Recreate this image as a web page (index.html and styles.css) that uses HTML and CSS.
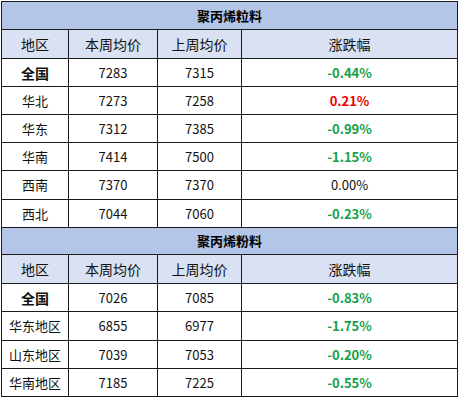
FILE: index.html
```html
<!DOCTYPE html>
<html lang="zh">
<head>
<meta charset="utf-8">
<link rel="stylesheet" href="styles.css">
</head>
<body>
<table class="price-table">
  <colgroup>
    <col class="c1"><col class="c2"><col class="c3"><col class="c4">
  </colgroup>
  <tbody>
    <tr class="r28 title"><td colspan="4">聚丙烯粒料</td></tr>
    <tr class="r29 head"><td>地区</td><td>本周均价</td><td>上周均价</td><td>涨跌幅</td></tr>
    <tr class="r28"><td class="bold">全国</td><td>7283</td><td>7315</td><td class="down">-0.44%</td></tr>
    <tr class="r28"><td>华北</td><td>7273</td><td>7258</td><td class="up">0.21%</td></tr>
    <tr class="r28"><td>华东</td><td>7312</td><td>7385</td><td class="down">-0.99%</td></tr>
    <tr class="r28"><td>华南</td><td>7414</td><td>7500</td><td class="down">-1.15%</td></tr>
    <tr class="r29"><td>西南</td><td>7370</td><td>7370</td><td>0.00%</td></tr>
    <tr class="r28"><td>西北</td><td>7044</td><td>7060</td><td class="down">-0.23%</td></tr>
    <tr class="r27 title"><td colspan="4">聚丙烯粉料</td></tr>
    <tr class="r29 head"><td>地区</td><td>本周均价</td><td>上周均价</td><td>涨跌幅</td></tr>
    <tr class="r28"><td class="bold">全国</td><td>7026</td><td>7085</td><td class="down">-0.83%</td></tr>
    <tr class="r29"><td>华东地区</td><td>6855</td><td>6977</td><td class="down">-1.75%</td></tr>
    <tr class="r28"><td>山东地区</td><td>7039</td><td>7053</td><td class="down">-0.20%</td></tr>
    <tr class="r28"><td>华南地区</td><td>7185</td><td>7225</td><td class="down">-0.55%</td></tr>
  </tbody>
</table>
</body>
</html>
```

FILE: styles.css
```css
html, body {
  margin: 0;
  padding: 0;
  background: #ffffff;
}
body {
  padding: 1px 0 0 1px;
  font-family: "Noto Sans CJK SC", "Noto Sans", sans-serif;
  font-size: 13px;
  color: #111;
}
.price-table {
  border-collapse: separate;
  border-spacing: 0;
  border-top: 1px solid #1a1a1a;
  border-left: 1px solid #1a1a1a;
  table-layout: fixed;
  width: 457px;
}
.c1 { width: 67px; }
.c2 { width: 89px; }
.c3 { width: 84px; }
.c4 { width: 216px; }
.price-table td {
  box-sizing: border-box;
  padding: 0;
  border-right: 1px solid #1a1a1a;
  border-bottom: 1px solid #1a1a1a;
  text-align: center;
  vertical-align: middle;
  line-height: 16px;
  white-space: nowrap;
  overflow: hidden;
}
.r27 td { height: 27px; }
.r28 td { height: 28px; }
.r29 td { height: 29px; }
.title td {
  background: #b4c6e7;
  font-weight: bold;
  font-size: 13px;
  color: #000;
}
.head td {
  background: #d9e1f2;
  font-size: 14px;
}
.bold { font-weight: bold; font-size: 14px; }
.down { color: #14a04a; font-weight: bold; }
.up { color: #f00000; font-weight: bold; }
```
